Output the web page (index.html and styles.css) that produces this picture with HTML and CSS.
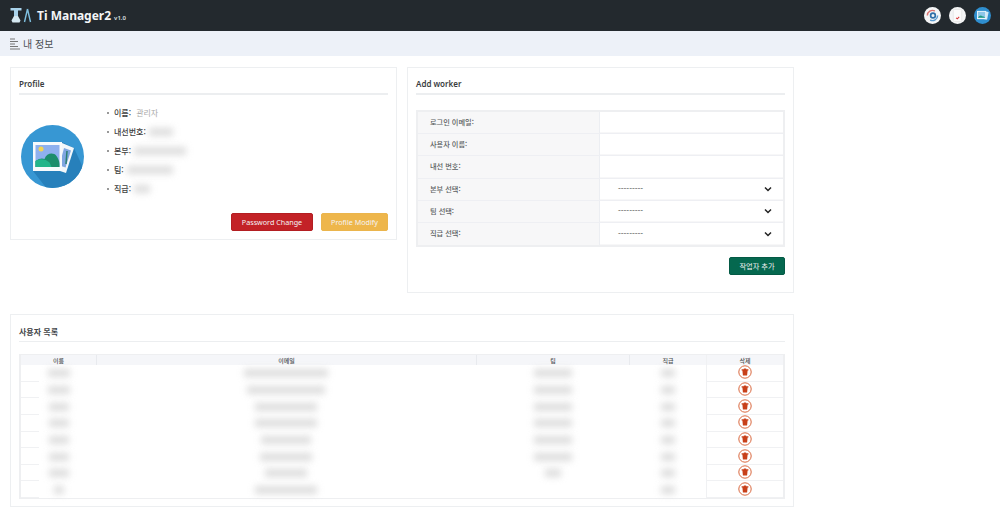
FILE: index.html
```html
<!DOCTYPE html>
<html lang="ko">
<head>
<meta charset="utf-8">
<title>Ti Manager2</title>
<link rel="stylesheet" href="styles.css">
</head>
<body>
<header class="topbar">
  <div class="brand">
    <svg class="logo" width="22" height="15" viewBox="0 0 22 15">
      <path d="M.5 0h11v2.500H8v5.500H4V2.500H.5z" fill="#a9d2ea"/>
      <path d="M4 8h4l2.500 4.500-1 2h-7l-1-2z" fill="#d5e8f1"/>
      <path d="M17.500 1l-3 13M17.500 1l3 13" stroke="#7fc0e0" stroke-width="1.400" fill="none"/>
    </svg>
    <span class="brand-name">Ti Manager2</span>
    <span class="brand-ver">v1.0</span>
  </div>
  <div class="top-icons">
    <span class="round-icon">
      <svg width="15" height="15" viewBox="0 0 16 16">
        <path d="M2.500 8a5.500 5.500 0 0 1 8-4.800" stroke="#d9736f" stroke-width="1.500" fill="none"/>
        <path d="M13.500 8a5.500 5.500 0 0 1-8 4.800" stroke="#5a9bd0" stroke-width="1.500" fill="none"/>
        <circle cx="8.500" cy="8" r="2.500" fill="none" stroke="#2f6fa8" stroke-width="1.800"/>
      </svg>
    </span>
    <span class="round-icon">
      <svg width="15" height="15" viewBox="0 0 16 16">
        <rect x="3.500" y="1.500" width="9" height="13" rx="1" fill="#fbfbfb" stroke="#e8e8e8"/>
        <path d="M6.500 10.500l1.300 1 2-2" stroke="#d8383a" stroke-width="1.100" fill="none"/>
      </svg>
    </span>
    <span class="round-icon round-blue">
      <svg width="13" height="11" viewBox="0 0 14 12">
        <path d="M11 1.500l2.700 .6-1.700 8.400-4-.7z" fill="#cfe6f3"/>
        <rect x="1" y="1" width="10" height="9" fill="#eaf5fb"/>
        <rect x="2" y="2" width="8" height="6.500" fill="#8ec6e8"/>
        <path d="M2 8.500c1.500-3 3.500-3 4.500-2s2.500 0 3.500 2z" fill="#1f9c83"/>
      </svg>
    </span>
  </div>
</header>
<div class="subbar">
  <svg class="menu-icon" width="10" height="12" viewBox="0 0 10 12">
    <path d="M0 1h5M0 3.500h8M0 6h5M0 8.500h8M0 11h10" stroke="#777" stroke-width="1"/>
  </svg>
  <span>내 정보</span>
</div>
<main class="content">
  <div class="top-row">
    <section class="card profile-card">
      <h2 class="card-title">Profile</h2>
      <div class="profile-body">
        <svg class="avatar" width="63" height="63" viewBox="0 0 63 63">
          <defs><clipPath id="circle-clip"><circle cx="31.500" cy="31.500" r="31.500"/></clipPath></defs>
          <circle cx="31.500" cy="31.500" r="31.500" fill="#3797d3"/>
          <g clip-path="url(#circle-clip)">
            <path d="M12 46L41 17l12 6 12 26-19 20H30z" fill="#2780bb"/>
          </g>
          <path d="M41 18l12 5-8 25-12-4z" fill="#f2f7fa"/>
          <path d="M43 23l7 2.500-5.500 17-6-2z" fill="#7fa6e0"/>
          <path d="M46 26l-1 13" stroke="#2b7f6f" stroke-width="1.500"/>
          <rect x="12" y="17" width="29" height="29" fill="#f7fafc"/>
          <rect x="14.500" y="20" width="24" height="22" fill="#8fb0ee"/>
          <circle cx="20" cy="24" r="2.500" fill="#f2d455"/>
          <path d="M14.500 36c4-3 7-3 9-2 2-6 9-7 12-3 1.500 2 3 5 3 8v3H14.500z" fill="#1d8d6c"/>
          <path d="M14.500 36c5-3 10-2 14 1.500l2 4.500H14.500z" fill="#22b58a"/>
        </svg>
        <ul class="info-list">
          <li><b>이름:</b> <span class="info-val">관리자</span></li>
          <li><b>내선번호:</b> <i class="blur w24"></i></li>
          <li><b>본부:</b> <i class="blur w52"></i></li>
          <li><b>팀:</b> <i class="blur w46"></i></li>
          <li><b>직급:</b> <i class="blur w16"></i></li>
        </ul>
      </div>
      <div class="actions">
        <button class="btn btn-red">Password Change</button>
        <button class="btn btn-yellow">Profile Modify</button>
      </div>
    </section>
    <section class="card worker-card">
      <h2 class="card-title">Add worker</h2>
      <div class="form-table">
        <div class="form-row"><label>로그인 이메일:</label><div class="form-val"></div></div>
        <div class="form-row"><label>사용자 이름:</label><div class="form-val"></div></div>
        <div class="form-row"><label>내선 번호:</label><div class="form-val"></div></div>
        <div class="form-row"><label>본부 선택:</label><div class="form-val select"><span>---------</span><svg class="chev" width="8" height="6" viewBox="0 0 8 6"><path d="M1 1.500l3 3 3-3" fill="none" stroke="#222" stroke-width="1.500"/></svg></div></div>
        <div class="form-row"><label>팀 선택:</label><div class="form-val select"><span>---------</span><svg class="chev" width="8" height="6" viewBox="0 0 8 6"><path d="M1 1.500l3 3 3-3" fill="none" stroke="#222" stroke-width="1.500"/></svg></div></div>
        <div class="form-row"><label>직급 선택:</label><div class="form-val select"><span>---------</span><svg class="chev" width="8" height="6" viewBox="0 0 8 6"><path d="M1 1.500l3 3 3-3" fill="none" stroke="#222" stroke-width="1.500"/></svg></div></div>
      </div>
      <div class="actions worker-actions">
        <button class="btn btn-green">작업자 추가</button>
      </div>
    </section>
  </div>
  <section class="card list-card">
    <h2 class="card-title list-title">사용자 목록</h2>
    <div class="user-table">
      <div class="t-row t-head"><div>이름</div><div>이메일</div><div>팀</div><div>직급</div><div>삭제</div></div>
      <div class="t-row"><div class="c1"><i class="blur w22"></i></div><div><i class="blur w84"></i></div><div><i class="blur w38"></i></div><div><i class="blur w14"></i></div><div><svg class="trash" viewBox="0 0 14 14"><use href="#trash"/></svg></div></div>
      <div class="t-row"><div class="c1"><i class="blur w22"></i></div><div><i class="blur w78"></i></div><div><i class="blur w38"></i></div><div><i class="blur w14"></i></div><div><svg class="trash" viewBox="0 0 14 14"><use href="#trash"/></svg></div></div>
      <div class="t-row"><div class="c1"><i class="blur w20"></i></div><div><i class="blur w62"></i></div><div><i class="blur w38"></i></div><div><i class="blur w14"></i></div><div><svg class="trash" viewBox="0 0 14 14"><use href="#trash"/></svg></div></div>
      <div class="t-row"><div class="c1"><i class="blur w20"></i></div><div><i class="blur w62"></i></div><div><i class="blur w38"></i></div><div><i class="blur w14"></i></div><div><svg class="trash" viewBox="0 0 14 14"><use href="#trash"/></svg></div></div>
      <div class="t-row"><div class="c1"><i class="blur w20"></i></div><div><i class="blur w50"></i></div><div><i class="blur w38"></i></div><div><i class="blur w14"></i></div><div><svg class="trash" viewBox="0 0 14 14"><use href="#trash"/></svg></div></div>
      <div class="t-row"><div class="c1"><i class="blur w20"></i></div><div><i class="blur w52"></i></div><div><i class="blur w38"></i></div><div><i class="blur w14"></i></div><div><svg class="trash" viewBox="0 0 14 14"><use href="#trash"/></svg></div></div>
      <div class="t-row"><div class="c1"><i class="blur w20"></i></div><div><i class="blur w42"></i></div><div><i class="blur w16"></i></div><div><i class="blur w14"></i></div><div><svg class="trash" viewBox="0 0 14 14"><use href="#trash"/></svg></div></div>
      <div class="t-row"><div class="c1"><i class="blur w10"></i></div><div><i class="blur w62"></i></div><div></div><div><i class="blur w14"></i></div><div><svg class="trash" viewBox="0 0 14 14"><use href="#trash"/></svg></div></div>
    </div>
  </section>
</main>
<svg class="sprite" width="0" height="0">
  <symbol id="trash" viewBox="0 0 14 14">
    <circle cx="7" cy="7" r="6.200" fill="#fff" stroke="#d9683f" stroke-width="1"/>
    <path d="M5.800 3.400h2.400v.8h2.200v1.400H9.600L9.100 10.400H4.900L4.400 5.600H3.600V4.200h2.200z" fill="#c8401a"/>
  </symbol>
</svg>
</body>
</html>
```

FILE: styles.css
```css
* { box-sizing: border-box; }
html, body { margin: 0; padding: 0; }
body {
  width: 1000px;
  height: 523px;
  overflow: hidden;
  background: #fff;
  color: #333;
  font-family: "Noto Sans CJK KR", "Noto Sans", sans-serif;
  font-size: 8px;
}
.topbar {
  height: 31px;
  background: #23292e;
  display: flex;
  align-items: center;
  justify-content: space-between;
  padding: 0 9px 0 10px;
}
.brand { display: flex; align-items: center; }
.logo { margin-right: 5px; display: block; }
.brand-name { color: #f4f6f7; font-family: "Noto Sans", sans-serif; font-size: 12px; font-weight: 700; }
.brand-ver { color: #dfe3e5; font-family: "Noto Sans", sans-serif; font-size: 6px; font-weight: 600; margin: 4px 0 0 3px; }
.top-icons { display: flex; gap: 8px; }
.round-icon {
  width: 17px;
  height: 17px;
  border-radius: 50%;
  background: #f4f5f6;
  display: flex;
  align-items: center;
  justify-content: center;
}
.round-icon svg { display: block; }
.round-blue { background: #2f8fd0; }
.subbar {
  height: 25px;
  background: #edf1f8;
  display: flex;
  align-items: center;
  padding: 0 0 0 10px;
  font-size: 10px;
  color: #4b4f53;
}
.menu-icon { margin-right: 3px; }
.content { width: 794px; padding: 11px 0 0 10px; }
.top-row { display: flex; gap: 10px; align-items: flex-start; }
.card {
  background: #fff;
  border: 1px solid #edeff1;
  padding: 0 8px;
}
.profile-card { width: 387px; height: 173px; }
.worker-card { width: 387px; height: 226px; }
.card-title {
  margin: 0;
  height: 27px;
  padding-top: 9px;
  font-family: "Noto Sans", sans-serif;
  font-size: 8px;
  line-height: 13px;
  font-weight: 600;
  color: #3a3d40;
  border-bottom: 2px solid #eceef0;
}
.profile-body { display: flex; align-items: flex-start; height: 118px; }
.avatar { margin: 30px 0 0 2px; flex: none; display: block; }
.info-list {
  list-style: none;
  margin: 8px 0 0 23px;
  padding: 0 0 0 7px;
  color: #777;
}
.info-list li { height: 19px; line-height: 19px; white-space: nowrap; display: flex; align-items: center; gap: 3px; }
.info-list li::before {
  content: "";
  width: 2px;
  height: 2px;
  border-radius: 50%;
  background: #777;
  margin: 0 2px 0 -7px;
  flex: none;
}
.info-list b { font-weight: 500; color: #404040; }
.info-val { color: #aaa; margin-left: 2px; }
.blur {
  display: inline-block;
  height: 8px;
  background: #d4d4d4;
  filter: blur(3.500px);
  vertical-align: middle;
  opacity: .8;
}
.w10 { width: 10px; } .w14 { width: 14px; } .w16 { width: 16px; } .w20 { width: 20px; }
.w22 { width: 22px; } .w24 { width: 24px; } .w38 { width: 38px; } .w42 { width: 42px; }
.w46 { width: 46px; } .w50 { width: 50px; } .w52 { width: 52px; } .w62 { width: 62px; }
.w78 { width: 78px; } .w84 { width: 84px; }
.actions { display: flex; justify-content: flex-end; gap: 8px; }
.btn {
  height: 18px;
  border: 1px solid transparent;
  border-radius: 2px;
  color: #f4f4f4;
  font-family: "Noto Sans", sans-serif;
  font-size: 7.200px;
  padding: 0;
}
.btn-red { width: 82px; background: #c32227; border-color: #b31e22; }
.btn-yellow { width: 67px; background: #eeb64b; border-color: #ebb54d; }
.btn-green { width: 56px; background: #05684f; border-color: #045a45; font-family: "Noto Sans CJK KR", sans-serif; }
.form-table {
  margin-top: 15px;
  border: 2px solid #eeeff1;
  background: #f7f7f8;
  font-size: 7.200px;
}
.form-row { display: flex; height: 22.200px; border-bottom: 1px solid #eeeff3; }
.form-row:last-child { border-bottom: 0; }
.form-row label {
  width: 182px;
  padding-left: 12px;
  line-height: 20px;
  color: #5c5f62;
  font-weight: 500;
  border-right: 1px solid #eceef2;
}
.form-val { flex: 1; background: #fff; margin-bottom: 1px; }
.select {
  display: flex;
  justify-content: space-between;
  align-items: center;
  padding: 0 11px 0 18px;
  color: #444;
  font-size: 8px;
}
.chev { display: block; }
.worker-actions { margin-top: 10px; }
.list-card { width: 784px; height: 193px; margin-top: 21px; }
.list-card .card-title { font-family: "Noto Sans CJK KR", sans-serif; border-bottom-width: 1px; color: #43464a; padding-top: 10px; }
.user-table { margin-top: 12px; border: solid #eeeff1; border-width: 1px 2px; }
.t-row {
  display: grid;
  grid-template-columns: 75px 380px 153px 77px 1fr;
  height: 16.650px;
  align-items: center;
  text-align: center;
}
.t-row > div { height: 100%; display: flex; align-items: center; justify-content: center; }
.t-row > div:last-child { border-left: 1px solid #f0f1f3; border-bottom: 1px solid #f0f1f3; }
.t-head { height: 10px; background: #f5f6f9; font-size: 6px; font-weight: 500; color: #4a4d50; }
.t-head > div { border-left: 1px solid #e8eaee; }
.t-head > div:first-child { border-left: 0; }
.t-head > div:last-child { border-bottom: 0; }
.c1 { background: linear-gradient(#f0f1f3, #f0f1f3) left bottom / 18px 1px no-repeat; }
.trash { width: 14px; height: 14px; display: block; margin-bottom: 1px; }
.sprite { position: absolute; }
```
